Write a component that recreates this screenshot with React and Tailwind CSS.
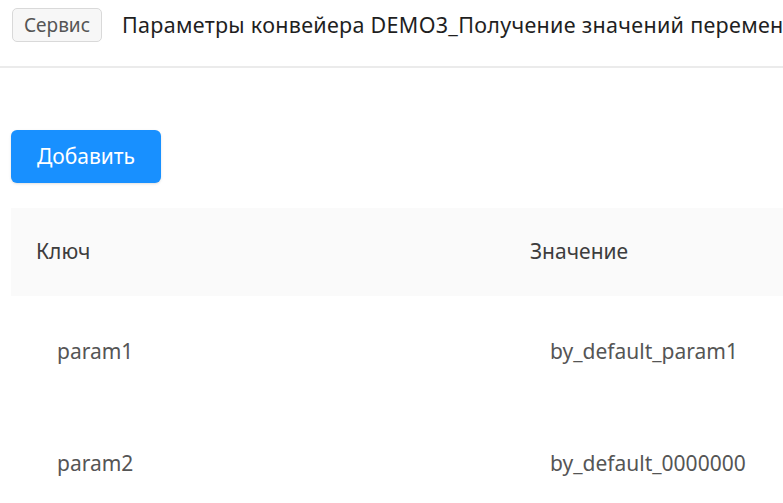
import React from 'react';

const rows = [
  { key: 'param1', value: 'by_default_param1' },
  { key: 'param2', value: 'by_default_0000000' },
];

const App = () => {
  return (
    <div className="w-[783px] h-[503px] overflow-hidden bg-white text-[#333]" style={{ fontFamily: '"Noto Sans", "Open Sans", sans-serif' }}>
      {/* Header */}
      <header className="h-[68px] flex items-start pt-2 pl-3 border-b-2 border-[#ebebeb] whitespace-nowrap">
        <button className="h-[34px] w-[90px] shrink-0 rounded-[5px] border border-[#d9d9d9] bg-[#f7f7f7] text-[19px] text-[#555] flex items-center justify-center">
          Сервис
        </button>
        <h1 className="ml-5 h-[34px] flex items-center text-[21.5px] tracking-[0.3px] text-[#1f1f1f]">
          Параметры конвейера DEMO3_Получение значений переменных
        </h1>
      </header>

      <main className="pl-[11px]">
        <div className="pt-[62px]">
          <button className="h-[53px] w-[150px] rounded-[6px] bg-[#1890ff] text-white text-[21px] shadow-sm flex items-center justify-center">
            Добавить
          </button>
        </div>

        {/* Table */}
        <div className="mt-[25px]">
          <div className="h-[88px] bg-[#fafafa] flex items-center text-[21px] text-[#3d3d3d]">
            <div className="w-[519px] pl-[25px]">Ключ</div>
            <div>Значение</div>
          </div>
          {rows.map(r => (
            <div key={r.key} className="h-[112px] flex items-center text-[21px] text-[#555]">
              <div className="w-[539px] pl-[46px]">{r.key}</div>
              <div>{r.value}</div>
            </div>
          ))}
        </div>
      </main>
    </div>
  );
};

export default App;
